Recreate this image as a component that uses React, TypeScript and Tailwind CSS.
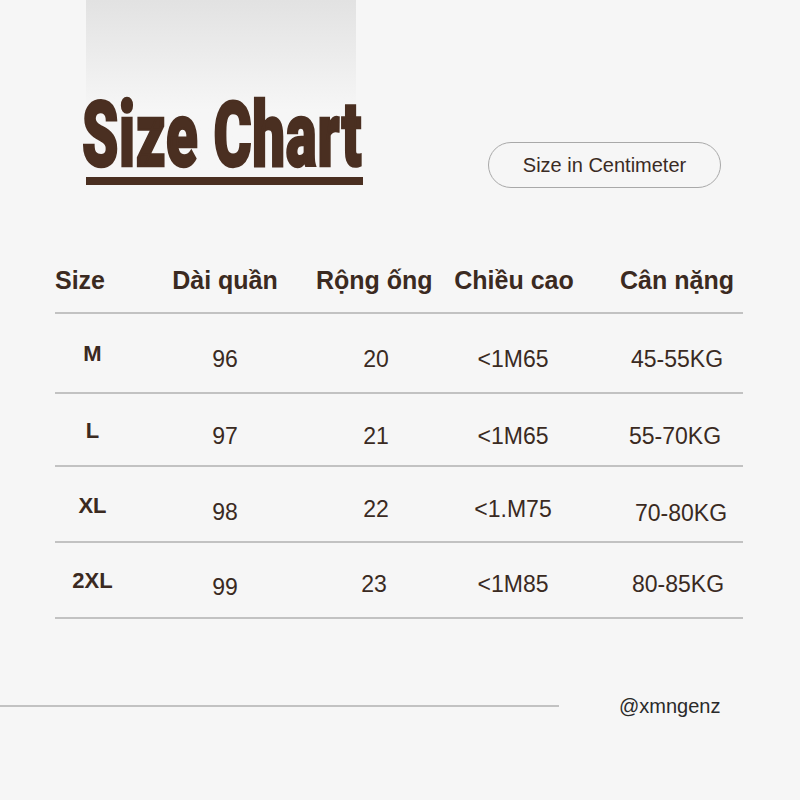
const rows = [
  { size: 'M', h: 78, lt: 28, vals: ['96', '20', '<1M65', '45-55KG'], vt: [33, 33, 33, 33], dx: [0, 0, 0, 0] },
  { size: 'L', h: 71, lt: 25, vals: ['97', '21', '<1M65', '55-70KG'], vt: [30, 30, 30, 30], dx: [0, 0, 0, -2] },
  { size: 'XL', h: 74, lt: 27, vals: ['98', '22', '<1.M75', '70-80KG'], vt: [33, 30, 30, 34], dx: [0, 0, 0, 4] },
  { size: '2XL', h: 74, lt: 26, vals: ['99', '23', '<1M85', '80-85KG'], vt: [32, 29, 29, 29], dx: [0, -2, 0, 1] },
];

const headers = [
  { t: 'Dài quần', dx: 0 },
  { t: 'Rộng ống', dx: -5 },
  { t: 'Chiều cao', dx: 1 },
  { t: 'Cân nặng', dx: 0 },
];

function Line() {
  return <div className="h-[2px] w-[688px] bg-[#c2c2c2]" />;
}

export default function App() {
  return (
    <div
      className="w-[800px] h-[800px] bg-[#f6f6f6] overflow-hidden text-[#3b2a21]"
      style={{ fontFamily: '"Liberation Sans", Arial, sans-serif' }}
    >
      {/* Header */}
      <div className="flex">
        <div className="ml-[86px] flex flex-col">
          <div className="w-[270px] h-[169px] bg-linear-to-b from-[#e2e2e2] to-[#f6f6f6] to-65% flex flex-col justify-end">
            <div className="h-[68px] leading-[68px] -ml-[4px] whitespace-nowrap">
              <span
                className="inline-block origin-left scale-x-[0.64] text-[91px] font-black text-[#4a2f21] [-webkit-text-stroke:2.5px_#4a2f21] tracking-[1px]"
                style={{ fontFamily: 'Roboto, sans-serif' }}
              >
                Size Chart
              </span>
            </div>
          </div>
          <div className="mt-[8px] h-[8px] w-[277px] bg-[#4a2f21]" />
        </div>
        <div className="ml-[125px] mt-[142px] h-[46px] w-[233px] rounded-full border-[1.5px] border-[#a9a9a9] flex items-center justify-center text-[20px] text-[#3a2b24]">
          Size in Centimeter
        </div>
      </div>

      {/* Table */}
      <div className="ml-[55px] mt-[77px] w-[688px]">
        <div className="grid grid-cols-[74px_192px_110px_164px_164px] w-[704px] h-[30px] leading-[30px] text-[25px] font-bold">
          <div className="text-left">Size</div>
          {headers.map((h) => (
            <div
              key={h.t}
              className="text-center whitespace-nowrap"
              style={{ transform: `translateX(${h.dx}px)` }}
            >
              {h.t}
            </div>
          ))}
        </div>
        <div className="mt-[17px]">
          <Line />
          {rows.map((r) => (
            <div key={r.size}>
              <div
                className="grid grid-cols-[74px_192px_110px_164px_164px] w-[704px] items-start"
                style={{ height: r.h }}
              >
                <div
                  className="text-center text-[22px] font-bold leading-[24px] ml-[1px]"
                  style={{ marginTop: r.lt }}
                >
                  {r.size}
                </div>
                {r.vals.map((v, i) => (
                  <div
                    key={i}
                    className="text-center text-[23px] leading-[24px] text-[#3a2a22]"
                    style={{ marginTop: r.vt[i], transform: `translateX(${r.dx[i]}px)` }}
                  >
                    {v}
                  </div>
                ))}
              </div>
              <Line />
            </div>
          ))}
        </div>
      </div>

      {/* Footer */}
      <div className="mt-[72px] h-[30px] flex items-center">
        <div className="h-[2px] w-[559px] bg-[#c2c2c2]" />
        <div className="ml-[60px] text-[20px] leading-[30px] text-[#2a2a2a]">@xmngenz</div>
      </div>
    </div>
  );
}
